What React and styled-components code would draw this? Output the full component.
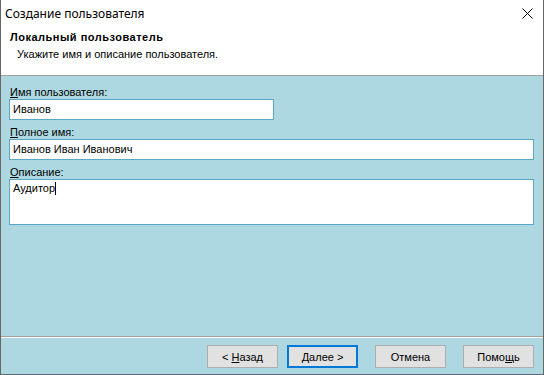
import React from 'react';
import styled, { createGlobalStyle } from 'styled-components';

const GlobalStyle = createGlobalStyle`
  html, body {
    margin: 0;
    padding: 0;
    background: #ffffff;
  }
`;

const Window = styled.div`
  width: 544px;
  height: 375px;
  box-sizing: border-box;
  border: 1px solid #666666;
  border-top: none;
  display: flex;
  flex-direction: column;
  font-family: 'Liberation Sans', Arial, sans-serif;
  font-size: 11px;
  color: #000000;
  background: #ffffff;
  overflow: hidden;
`;

const TitleBar = styled.div`
  height: 29px;
  display: flex;
  align-items: center;
  justify-content: space-between;
  padding: 0 10px 0 4px;
`;

const Title = styled.div`
  font-family: 'Noto Sans', 'Segoe UI', sans-serif;
  font-size: 12px;
  line-height: 16px;
  margin-top: -2px;
`;

const CloseButton = styled.button`
  border: none;
  background: transparent;
  padding: 0;
  width: 11px;
  height: 11px;
  display: flex;
  margin-top: -3px;
  svg {
    display: block;
  }
`;

const Header = styled.div`
  height: 47px;
  box-sizing: border-box;
  padding: 2px 0 0 9px;
  border-bottom: 1px solid #a0a0a0;
`;

const HeaderTitle = styled.div`
  font-weight: bold;
  line-height: 13px;
  letter-spacing: 0.5px;
`;

const HeaderText = styled.div`
  line-height: 13px;
  margin-top: 4px;
  padding-left: 7px;
`;

const Body = styled.div`
  flex: 1;
  background: #aed8e1;
  display: flex;
  flex-direction: column;
`;

const Form = styled.div`
  flex: 1;
  padding: 10px 9px 0 8px;
  display: flex;
  flex-direction: column;
`;

const Field = styled.div`
  display: flex;
  flex-direction: column;
  margin-top: ${(p) => (p.first ? 0 : 6)}px;
`;

const Label = styled.label`
  line-height: 13px;
  padding-left: 1px;
  u {
    text-decoration: underline;
  }
`;

const TextBox = styled.div`
  box-sizing: border-box;
  width: ${(p) => p.width || '100%'};
  height: ${(p) => p.height || 21}px;
  background: #ffffff;
  border: 1px solid #5ba8c4;
  padding: ${(p) => (p.multiline ? '2px 3px' : '3px 3px')};
  line-height: 13px;
  white-space: nowrap;
`;

const Caret = styled.span`
  display: inline-block;
  width: 1px;
  height: 13px;
  background: #000000;
  vertical-align: top;
`;

const Footer = styled.div`
  border-top: 1px solid #a0a0a0;
  box-shadow: inset 0 1px 0 #ffffff;
  padding: 8px 9px 6px 0;
  display: flex;
  justify-content: flex-end;
`;

const Button = styled.button`
  box-sizing: border-box;
  width: 71px;
  height: 23px;
  margin-left: ${(p) => p.gap || 0}px;
  background: #e1e1e1;
  border: ${(p) => (p.primary ? '2px solid #0078d7' : '1px solid #adadad')};
  font-family: 'Liberation Sans', Arial, sans-serif;
  font-size: 11px;
  color: #000000;
  padding: 0;
  display: flex;
  align-items: center;
  justify-content: center;
`;

const CloseIcon = () => (
  <svg width="11" height="11" viewBox="0 0 11 11">
    <path d="M0.5 0.5 L10.5 10.5 M10.5 0.5 L0.5 10.5" stroke="#000" strokeWidth="1" fill="none" />
  </svg>
);

const App = () => {
  return (
    <>
      <GlobalStyle />
      <Window>
        <TitleBar>
          <Title>Создание пользователя</Title>
          <CloseButton aria-label="Закрыть">
            <CloseIcon />
          </CloseButton>
        </TitleBar>
        <Header>
          <HeaderTitle>Локальный пользователь</HeaderTitle>
          <HeaderText>Укажите имя и описание пользователя.</HeaderText>
        </Header>
        <Body>
          <Form>
            <Field first>
              <Label>
                <u>И</u>мя пользователя:
              </Label>
              <TextBox width="265px">Иванов</TextBox>
            </Field>
            <Field>
              <Label>
                <u>П</u>олное имя:
              </Label>
              <TextBox>Иванов Иван Иванович</TextBox>
            </Field>
            <Field>
              <Label>
                <u>О</u>писание:
              </Label>
              <TextBox multiline height={46}>
                Аудитор
                <Caret />
              </TextBox>
            </Field>
          </Form>
          <Footer>
            <Button>
              &lt;&nbsp;<u>Н</u>азад
            </Button>
            <Button primary gap={9}>
              <u>Д</u>алее &gt;
            </Button>
            <Button gap={17}>Отмена</Button>
            <Button gap={17}>
              Помо<u>щ</u>ь
            </Button>
          </Footer>
        </Body>
      </Window>
    </>
  );
};

export default App;
